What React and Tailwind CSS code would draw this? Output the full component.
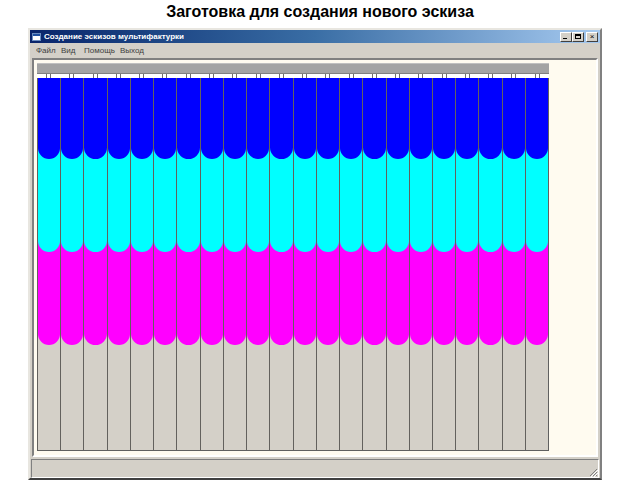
import React from "react";

const STRIPS = Array.from({ length: 22 }, (_, i) => i);

function TitleButton({ children }) {
  return (
    <div className="w-[12px] h-[10px] bg-[#d4d0c8] border border-t-white border-l-white border-r-[#404040] border-b-[#404040] flex items-center justify-center text-[8px] leading-none text-black">
      {children}
    </div>
  );
}

export default function App() {
  return (
    <div className="w-[640px] h-[480px] bg-white overflow-hidden" style={{ fontFamily: "'Liberation Sans', Arial, sans-serif" }}>
      {/* heading */}
      <div className="h-[28px] flex items-center justify-center text-[16px] font-bold text-black pb-[4px]">
        Заготовка для создания нового эскиза
      </div>

      {/* window */}
      <div className="ml-[28px] w-[574px] h-[452px] bg-[#d4d0c8] border-2 border-t-[#e8e6e0] border-l-[#e8e6e0] border-r-[#808080] border-b-[#404040] flex flex-col">
        {/* title bar */}
        <div className="h-[13px] flex items-center bg-gradient-to-r from-[#0a246a] via-[#3a6ea5] to-[#a6caf0] pl-[2px] pr-[2px]">
          <div className="w-[9px] h-[8px] bg-white border border-[#6a8cc0] mr-[3px] flex flex-col">
            <div className="h-[2px] bg-[#2050a0]" />
          </div>
          <span className="text-[8px] font-bold text-white leading-none">Создание эскизов мультифактурки</span>
          <div className="ml-auto flex items-center">
            <TitleButton>
              <span className="block w-[4px] h-[1px] bg-black mt-[4px] -ml-[2px]" />
            </TitleButton>
            <TitleButton>
              <span className="block w-[6px] h-[5px] border border-black border-t-2" />
            </TitleButton>
            <div className="w-[2px]" />
            <TitleButton>×</TitleButton>
          </div>
        </div>

        {/* menu bar */}
        <div className="h-[15px] flex items-center text-[8px] text-[#404040] leading-none pl-[6px]">
          <span className="w-[25px]">Файл</span>
          <span className="w-[23px]">Вид</span>
          <span className="w-[36px]">Помощь</span>
          <span>Выход</span>
        </div>

        {/* client area */}
        <div className="mx-[2px] h-[399px] border-2 border-t-[#808080] border-l-[#808080] border-r-white border-b-white bg-[#fffbf0] pl-[3px] pt-[3px]">
          <div className="w-[512px]">
            {/* rod */}
            <div className="h-[11px] bg-[#a4a4a4] border-t border-[#c0c0c0] border-b border-b-[#808080]" />
            {/* hooks */}
            <div className="h-[4px] flex bg-white">
              {STRIPS.map((i) => (
                <div key={i} className="flex-1 flex justify-center">
                  <div className="w-[5px] h-[4px] border-l border-r border-[#707070]" />
                </div>
              ))}
            </div>
            {/* curtain */}
            <div className="h-[373px] flex border-r border-b border-[#606060]">
              {STRIPS.map((i) => (
                <div key={i} className="flex-1 bg-[#d4d0c8] border-l border-[#00000088]">
                  <div className="h-[267px] bg-[#ff00ff] rounded-b-full">
                    <div className="h-[174px] bg-[#00ffff] rounded-b-full">
                      <div className="h-[81px] bg-[#0000ff] rounded-b-full" />
                    </div>
                  </div>
                </div>
              ))}
            </div>
          </div>
        </div>

        {/* status bar */}
        <div className="mt-[2px] mx-[1px] h-[19px] border border-t-[#808080] border-l-[#808080] border-r-white border-b-white flex items-end justify-end">
          <svg width="10" height="10" viewBox="0 0 10 10">
            <path d="M9 2 L2 9 M9 5 L5 9 M9 8 L8 9" stroke="#808080" strokeWidth="1" />
            <path d="M10 3 L3 10 M10 6 L6 10" stroke="#ffffff" strokeWidth="1" />
          </svg>
        </div>
      </div>
    </div>
  );
}
